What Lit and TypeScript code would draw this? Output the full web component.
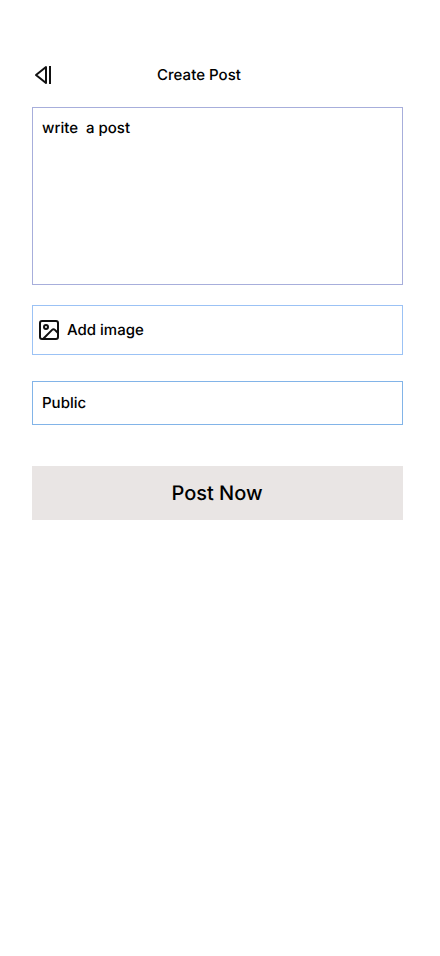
import { LitElement, html, css } from "lit";
import { customElement } from "lit/decorators.js";

@customElement("app-root")
export class AppRoot extends LitElement {
  static styles = css`
    :host {
      display: block;
      box-sizing: border-box;
      height: 956px;
      padding: 63px 37px 0 32px;
      background: #fff;
      color: #000;
      font: 500 15px/24px Inter, sans-serif;
      text-rendering: geometricPrecision;
    }
    * { box-sizing: border-box; }
    header { display: flex; align-items: center; height: 24px; margin-bottom: 20px; }
    svg { display: block; flex: none; fill: none; stroke: #111; stroke-width: 2; }
    .title { margin-left: 101px; letter-spacing: 0.04px; }
    .field { border: 1px solid #a7aedb; padding: 0 9px; white-space: pre; }
    .post { height: 178px; padding-top: 8px; }
    .image { display: flex; align-items: center; gap: 6px; height: 50px; margin-top: 20px; padding: 0 4px; border-color: #9bc2f5; }
    .public { display: flex; align-items: center; height: 44px; margin-top: 26px; border-color: #82b4e8; }
    .submit { display: flex; align-items: center; justify-content: center; height: 54px; margin-top: 41px; padding-right: 1px; background: #e9e5e4; font-size: 20px; }
  `;

  render() {
    return html`
      <header>
        <svg width="24" height="24" viewBox="0 0 24 24"><path d="M14 4v16L4 12zM18 3v18" stroke-linejoin="round" /></svg>
        <span class="title">Create Post</span>
      </header>
      <div class="field post">write  a post</div>
      <div class="field image"><svg width="24" height="24" viewBox="0 0 24 24" stroke-linecap="round" stroke-linejoin="round"><rect x="3" y="3" width="18" height="18" rx="2" /><circle cx="9" cy="9" r="2" /><path d="m21 15-3.1-3.1a2 2 0 0 0-2.8 0L6 21" /></svg><span>Add image</span></div>
      <div class="field public">Public</div>
      <div class="submit">Post Now</div>
    `;
  }
}
